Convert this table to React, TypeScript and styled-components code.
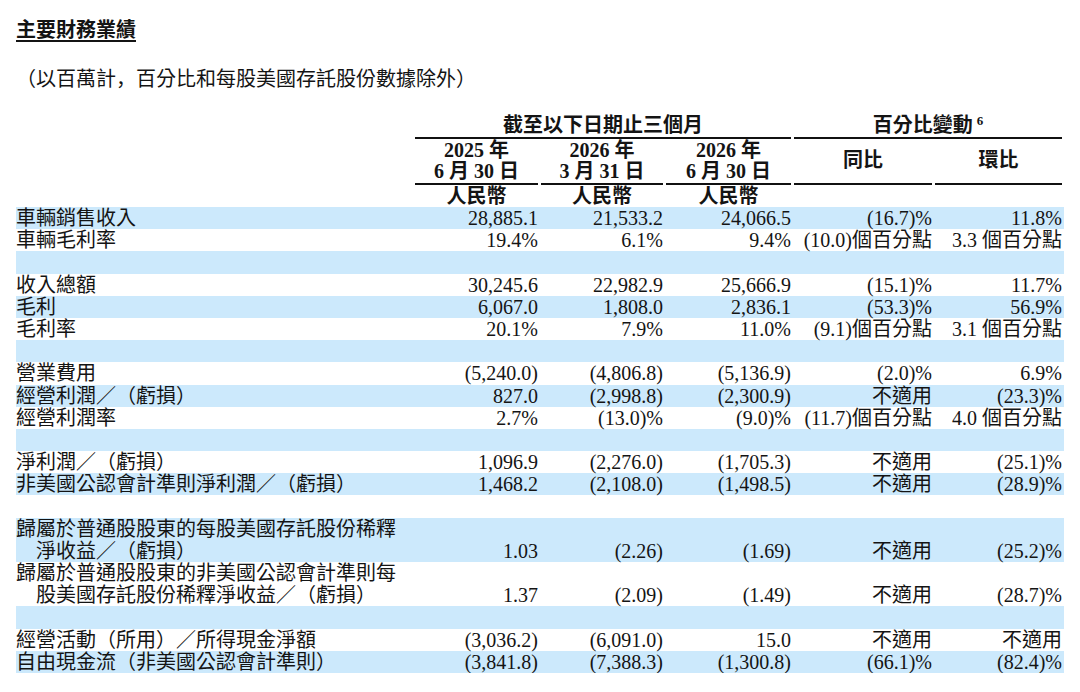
import React from "react";
import styled, { createGlobalStyle } from "styled-components";

const GlobalStyle = createGlobalStyle`
  html, body {
    margin: 0;
    padding: 0;
    background: #ffffff;
  }
  body {
    font-family: "Liberation Serif", "Noto Sans CJK TC", serif;
    color: #141414;
    font-size: 20px;
  }
`;

const COLS = "396px 123px 122px 125px 138px 127px";

const Page = styled.div`
  width: 1080px;
  box-sizing: border-box;
  padding: 19px 0 0 16px;
`;

const Title = styled.div`
  font-weight: 700;
  font-size: 20px;
  line-height: 22px;
  text-decoration: underline;
  text-decoration-thickness: 1.5px;
  text-underline-offset: 3px;
`;

const Subtitle = styled.div`
  margin-top: 26px;
  font-size: 20px;
  line-height: 22px;
`;

const Comma = styled.span`
  font-family: "Noto Sans CJK SC", "Noto Sans CJK TC", sans-serif;
`;

const Table = styled.div`
  margin-top: 25px;
  width: 1048px;
`;

const HeadRow = styled.div`
  display: grid;
  grid-template-columns: ${COLS};
  column-gap: 3px;
  padding-right: 2px;
  font-weight: 700;
  line-height: 21.5px;
`;

const GroupHead = styled.div<{ $from: number; $to: number }>`
  grid-column: ${(p) => p.$from} / ${(p) => p.$to};
  text-align: center;
  border-bottom: 2px solid #111;
  white-space: nowrap;
`;

const Sup = styled.sup`
  font-size: 13px;
  line-height: 0;
  vertical-align: 7px;
  margin-left: 4px;
`;

const DateHead = styled.div<{ $ruled?: boolean }>`
  display: flex;
  flex-direction: column;
  align-items: center;
  justify-content: center;
  text-align: center;
  white-space: nowrap;
  border-bottom: ${(p) => (p.$ruled ? "2px solid #111" : "none")};
  padding-top: 1px;
`;

const Row = styled.div<{ $shaded: boolean; $tall?: boolean }>`
  display: grid;
  grid-template-columns: ${COLS};
  column-gap: 3px;
  padding-right: 2px;
  height: ${(p) => (p.$tall ? "44.4px" : "22.2px")};
  align-items: end;
  background: ${(p) => (p.$shaded ? "#cce9fc" : "#ffffff")};
  line-height: 22.2px;
`;

const Label = styled.div`
  white-space: nowrap;
  padding-left: 1em;
  text-indent: -1em;
`;

const Value = styled.div`
  text-align: right;
  white-space: nowrap;
`;

type DataRow = {
  label?: string[];
  values?: string[];
};

const rows: DataRow[] = [
  { label: ["車輛銷售收入"], values: ["28,885.1", "21,533.2", "24,066.5", "(16.7)%", "11.8%"] },
  { label: ["車輛毛利率"], values: ["19.4%", "6.1%", "9.4%", "(10.0)個百分點", "3.3 個百分點"] },
  {},
  { label: ["收入總額"], values: ["30,245.6", "22,982.9", "25,666.9", "(15.1)%", "11.7%"] },
  { label: ["毛利"], values: ["6,067.0", "1,808.0", "2,836.1", "(53.3)%", "56.9%"] },
  { label: ["毛利率"], values: ["20.1%", "7.9%", "11.0%", "(9.1)個百分點", "3.1 個百分點"] },
  {},
  { label: ["營業費用"], values: ["(5,240.0)", "(4,806.8)", "(5,136.9)", "(2.0)%", "6.9%"] },
  { label: ["經營利潤／（虧損）"], values: ["827.0", "(2,998.8)", "(2,300.9)", "不適用", "(23.3)%"] },
  { label: ["經營利潤率"], values: ["2.7%", "(13.0)%", "(9.0)%", "(11.7)個百分點", "4.0 個百分點"] },
  {},
  { label: ["淨利潤／（虧損）"], values: ["1,096.9", "(2,276.0)", "(1,705.3)", "不適用", "(25.1)%"] },
  { label: ["非美國公認會計準則淨利潤／（虧損）"], values: ["1,468.2", "(2,108.0)", "(1,498.5)", "不適用", "(28.9)%"] },
  {},
  {
    label: ["歸屬於普通股股東的每股美國存託股份稀釋", "淨收益／（虧損）"],
    values: ["1.03", "(2.26)", "(1.69)", "不適用", "(25.2)%"],
  },
  {
    label: ["歸屬於普通股股東的非美國公認會計準則每", "股美國存託股份稀釋淨收益／（虧損）"],
    values: ["1.37", "(2.09)", "(1.49)", "不適用", "(28.7)%"],
  },
  {},
  { label: ["經營活動（所用）／所得現金淨額"], values: ["(3,036.2)", "(6,091.0)", "15.0", "不適用", "不適用"] },
  { label: ["自由現金流（非美國公認會計準則）"], values: ["(3,841.8)", "(7,388.3)", "(1,300.8)", "(66.1)%", "(82.4)%"] },
];

const dates = [
  ["2025 年", "6 月 30 日"],
  ["2026 年", "3 月 31 日"],
  ["2026 年", "6 月 30 日"],
];

export default function App() {
  return (
    <>
      <GlobalStyle />
      <Page>
        <Title>主要財務業績</Title>
        <Subtitle>
          （以百萬計<Comma>，</Comma>百分比和每股美國存託股份數據除外）
        </Subtitle>
        <Table>
          <HeadRow>
            <div />
            <GroupHead $from={2} $to={5}>截至以下日期止三個月</GroupHead>
            <GroupHead $from={5} $to={7}>
              百分比變動<Sup>6</Sup>
            </GroupHead>
          </HeadRow>
          <HeadRow>
            <div />
            {dates.map((d, i) => (
              <DateHead key={i} $ruled>
                <span>{d[0]}</span>
                <span>{d[1]}</span>
              </DateHead>
            ))}
            <DateHead $ruled>同比</DateHead>
            <DateHead $ruled>環比</DateHead>
          </HeadRow>
          <HeadRow>
            <div />
            <DateHead>人民幣</DateHead>
            <DateHead>人民幣</DateHead>
            <DateHead>人民幣</DateHead>
            <div />
            <div />
          </HeadRow>
          {rows.map((r, i) => {
            const tall = (r.label?.length ?? 1) > 1;
            return (
              <Row key={i} $shaded={i % 2 === 0} $tall={tall}>
                <Label>
                  {r.label?.map((l, j) => (
                    <React.Fragment key={j}>
                      {j > 0 && <br />}
                      {l}
                    </React.Fragment>
                  ))}
                </Label>
                {(r.values ?? ["", "", "", "", ""]).map((v, j) => (
                  <Value key={j}>{v}</Value>
                ))}
              </Row>
            );
          })}
        </Table>
      </Page>
    </>
  );
}
